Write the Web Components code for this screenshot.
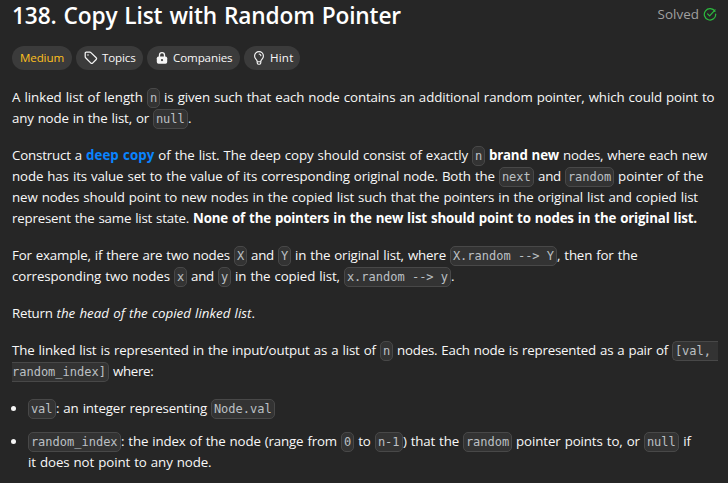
<!DOCTYPE html>
<html lang="en">
<head>
<meta charset="utf-8">
<title>138. Copy List with Random Pointer</title>
<style>
html,body{margin:0;height:100%;background:#262626;overflow:hidden}
body{font-family:"Open Sans","Noto Sans",sans-serif;color:#f8f8f8}
</style>
</head>
<body>
<problem-page></problem-page>
<script>
// Text run that spreads its letters evenly over the width given in "w".
customElements.define('text-run', class extends HTMLElement {
  connectedCallback() {
    if (this.shadowRoot) return;
    const root = this.attachShadow({mode: 'open'});
    root.innerHTML = `<style>
      :host{display:block;flex:none;white-space:pre;word-spacing:.055em}
      :host([bold]){font-weight:700;color:#fff}
      :host([link]){color:#0a84ff}
      :host([italic]){font-style:italic}
      span{display:inline-block}
    </style><span><slot></slot></span>`;
    const w = parseFloat(this.getAttribute('w'));
    if (!w) return;
    this.style.width = w + 'px';
    const span = root.querySelector('span');
    const natural = span.getBoundingClientRect().width;
    this.style.letterSpacing = (w - natural) / this.textContent.length + 'px';
  }
});

customElements.define('code-chip', class extends HTMLElement {
  connectedCallback() {
    if (this.shadowRoot) return;
    this.attachShadow({mode: 'open'}).innerHTML = `<style>
      :host{display:block;flex:none;box-sizing:border-box;height:20px;margin-top:1px;
        padding:0 0 0 1.9px;border:1px solid #484848;border-radius:5px;background:#333;
        font:12px/18px "DejaVu Sans Mono",monospace;color:#bcc0c4;white-space:pre}
      :host([open-end]){border-right:0;border-radius:5px 0 0 5px}
      :host([open-start]){border-left:0;border-radius:0 5px 5px 0;padding-left:0}
    </style><slot></slot>`;
    this.style.width = this.getAttribute('w') + 'px';
  }
});

customElements.define('text-line', class extends HTMLElement {
  connectedCallback() {
    if (this.shadowRoot) return;
    this.attachShadow({mode: 'open'}).innerHTML = `<style>
      :host{display:flex;height:21px;font-size:13.3px;line-height:21px}
    </style><slot></slot>`;
  }
});

customElements.define('text-block', class extends HTMLElement {
  connectedCallback() {
    if (this.shadowRoot) return;
    this.attachShadow({mode: 'open'}).innerHTML = `<style>
      :host{display:block}
      :host([item]){display:grid;grid-template-columns:16px 1fr;margin-bottom:-4px}
      i{display:none}
      :host([item]) i{display:block;width:5px;height:5px;border-radius:50%;background:#f5f5f5;margin:8px 0 0 -1px}
    </style><i></i><div><slot></slot></div>`;
  }
});

const icons = {
  tag: `<svg viewBox="0 0 14 14" width="14" height="14" fill="none" stroke="#f5f5f5" stroke-width="1.25" stroke-linejoin="round"><path d="M1.2 2.2v3.5c0 .4.1.7.4 1l5.3 5.4c.5.5 1.2.5 1.7 0l3.6-3.6c.5-.5.5-1.2 0-1.7L6.9 1.6c-.3-.3-.6-.4-1-.4H2.2c-.6 0-1 .4-1 1z"/><circle cx="4" cy="4" r=".75" fill="#f5f5f5" stroke="none"/></svg>`,
  lock: `<svg viewBox="0 0 14 14" width="14" height="14"><path d="M4.5 6V4.1a2.5 2.5 0 0 1 5 0V6" fill="none" stroke="#f5f5f5" stroke-width="1.3"/><rect x="1.8" y="5.5" width="10.4" height="7.3" rx="1.7" fill="#f5f5f5"/><circle cx="7" cy="9.1" r="1.1" fill="#3b3b3b"/></svg>`,
  bulb: `<svg viewBox="0 0 14 14" width="14" height="14" fill="none" stroke="#f5f5f5" stroke-width="1.15" stroke-linecap="round" stroke-linejoin="round"><path d="M5.2 10.7c0-1.5-.8-2-1.5-2.9A4.1 4.1 0 0 1 2.6 5a4.4 4.4 0 0 1 8.8 0c0 1.1-.4 2-1.1 2.8-.7.9-1.5 1.4-1.5 2.9v1.1c0 .8-.5 1.4-1.3 1.4h-1c-.8 0-1.3-.6-1.3-1.4zM5.3 10.7h3.4M7.2 3a2 2 0 0 1 1.7 1.7"/></svg>`
};
customElements.define('tag-pill', class extends HTMLElement {
  connectedCallback() {
    if (this.shadowRoot) return;
    this.attachShadow({mode: 'open'}).innerHTML = `<style>
      :host{display:flex;align-items:center;box-sizing:border-box;height:24px;padding-left:8px;gap:4px;
        border-radius:12px;background:#3b3b3b;font-size:11.6px;line-height:24px}
      :host([medium]){color:#ffc01e}
      svg{display:block}
    </style>${icons[this.getAttribute('icon')] || ''}<slot></slot>`;
    this.style.width = this.getAttribute('w') + 'px';
  }
});

customElements.define('problem-header', class extends HTMLElement {
  connectedCallback() {
    if (this.shadowRoot) return;
    this.attachShadow({mode: 'open'}).innerHTML = `<style>
      header{display:flex;justify-content:space-between;height:46px}
      h1{margin:0;font-size:22.7px;font-weight:600;line-height:32px;color:#fff}
      .solved{display:flex;align-items:center;gap:4px;height:28px;font-size:13.4px;color:#a0a0a0}
      svg{display:block;margin-right:-1px}
      nav{display:flex;gap:4px}
    </style>
    <header><h1><text-run w="389">138. Copy List with Random Pointer</text-run></h1>
    <div class="solved"><text-run w="41.5">Solved</text-run><svg viewBox="0 0 14 14" width="14" height="14" fill="none" stroke="#2cbb3f" stroke-width="1.2" stroke-linecap="round" stroke-linejoin="round"><path d="M11.9 4.4A5.7 5.7 0 1 0 12.7 7M4.6 6.9l2 2 5.5-6"/></svg></div></header>
    <nav>
      <tag-pill w="60" medium><text-run w="44">Medium</text-run></tag-pill>
      <tag-pill w="67" icon="tag"><text-run w="33.5">Topics</text-run></tag-pill>
      <tag-pill w="93" icon="lock"><text-run w="59.5">Companies</text-run></tag-pill>
      <tag-pill w="56" icon="bulb"><text-run w="23.5">Hint</text-run></tag-pill>
    </nav>`;
  }
});

customElements.define('problem-page', class extends HTMLElement {
  connectedCallback() {
    if (this.shadowRoot) return;
    this.attachShadow({mode: 'open'}).innerHTML = `<style>
      :host{display:block;padding:0 12px}
      main{display:flex;flex-direction:column;gap:16px;padding-top:17px}
    </style>
    <problem-header></problem-header>
    <main>
      <text-block>
        <text-line><text-run w="135">A linked list of length </text-run><code-chip w="13">n</code-chip><text-run w="554.5"> is given such that each node contains an additional random pointer, which could point to</text-run></text-line>
        <text-line><text-run w="141">any node in the list, or </text-run><code-chip w="35">null</code-chip><text-run w="3.5">.</text-run></text-line>
      </text-block>
      <text-block>
        <text-line><text-run w="74">Construct a </text-run><text-run bold link w="68.3">deep copy</text-run><text-run w="317.7"> of the list. The deep copy should consist of exactly </text-run><code-chip w="13">n</code-chip><text-run w="4"> </text-run><text-run bold w="70">brand new</text-run><text-run w="148"> nodes, where each new</text-run></text-line>
        <text-line><text-run w="487">node has its value set to the value of its corresponding original node. Both the </text-run><code-chip w="35">next</code-chip><text-run w="31"> and </text-run><code-chip w="49">random</code-chip><text-run w="89.5"> pointer of the</text-run></text-line>
        <text-line><text-run w="686">new nodes should point to new nodes in the copied list such that the pointers in the original list and copied list</text-run></text-line>
        <text-line><text-run w="181">represent the same list state. </text-run><text-run bold w="504">None of the pointers in the new list should point to nodes in the original list.</text-run></text-line>
      </text-block>
      <text-block>
        <text-line><text-run w="222">For example, if there are two nodes </text-run><code-chip w="13">X</code-chip><text-run w="31"> and </text-run><code-chip w="13">Y</code-chip><text-run w="159"> in the original list, where </text-run><code-chip w="107">X.random --&gt; Y</code-chip><text-run w="80.5">, then for the</text-run></text-line>
        <text-line><text-run w="162">corresponding two nodes </text-run><code-chip w="13">x</code-chip><text-run w="31"> and </text-run><code-chip w="13">y</code-chip><text-run w="113"> in the copied list, </text-run><code-chip w="107">x.random --&gt; y</code-chip><text-run w="3.5">.</text-run></text-line>
      </text-block>
      <text-block>
        <text-line><text-run w="44.5">Return </text-run><text-run italic w="195">the head of the copied linked list</text-run><text-run w="3.5">.</text-run></text-line>
      </text-block>
      <text-block>
        <text-line><text-run w="368">The linked list is represented in the input/output as a list of </text-run><code-chip w="13">n</code-chip><text-run w="279"> nodes. Each node is represented as a pair of </text-run><code-chip w="46" open-end>[val, </code-chip></text-line>
        <text-line><code-chip w="97" open-start>random_index]</code-chip><text-run w="44.5"> where:</text-run></text-line>
      </text-block>
      <text-block item>
        <text-line><code-chip w="28">val</code-chip><text-run w="155">: an integer representing </text-run><code-chip w="64">Node.val</code-chip></text-line>
      </text-block>
      <text-block item>
        <text-line><code-chip w="93">random_index</code-chip><text-run w="220">: the index of the node (range from </text-run><code-chip w="13">0</code-chip><text-run w="21"> to </text-run><code-chip w="28">n-1</code-chip><text-run w="60">) that the </text-run><code-chip w="49">random</code-chip><text-run w="132"> pointer points to, or </text-run><code-chip w="35">null</code-chip><text-run w="12"> if</text-run></text-line>
        <text-line><text-run w="183.5">it does not point to any node.</text-run></text-line>
      </text-block>
    </main>`;
  }
});
</script>
</body>
</html>
